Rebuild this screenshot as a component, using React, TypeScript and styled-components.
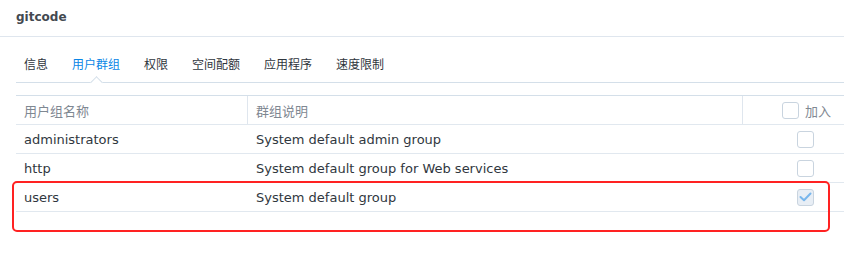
import React from "react";
import styled, { createGlobalStyle } from "styled-components";

const Global = createGlobalStyle`
  html, body { margin: 0; padding: 0; background: #ffffff; }
  body { font-family: "DejaVu Sans", "Noto Sans CJK SC", sans-serif; overflow: hidden; }
  * { box-sizing: border-box; }
`;

const Page = styled.div`
  position: relative;
  width: 844px;
  height: 259px;
  overflow: hidden;
  background: #fff;
`;

const Header = styled.div`
  height: 37px;
  border-bottom: 1px solid #dfe6ee;
  display: flex;
  align-items: center;
  padding: 0 16px 2px;
`;

const Title = styled.div`
  font-family: "DejaVu Sans", sans-serif;
  font-weight: bold;
  font-size: 12px;
  color: #434950;
`;

const Body = styled.div`
  padding: 0 0 0 16px;
`;

const TabBar = styled.div`
  display: flex;
  gap: 24px;
  padding: 9px 8px 0;
  height: 46px;
  align-items: center;
  border-bottom: 1px solid #d4dfe9;
  width: 900px;
`;

const Tab = styled.div<{ $active?: boolean }>`
  position: relative;
  font-family: "Noto Sans CJK SC", sans-serif;
  font-size: 12px;
  line-height: 16px;
  color: ${(p) => (p.$active ? "#0a86e6" : "#2f363d")};
`;

const Notch = styled.div`
  position: absolute;
  left: 50%;
  bottom: -15px;
  width: 9px;
  height: 9px;
  margin-left: -4.5px;
  background: #fff;
  border-left: 1px solid #d4dfe9;
  border-top: 1px solid #d4dfe9;
  transform: rotate(45deg);
`;

const Table = styled.div`
  margin-top: 12px;
  width: 900px;
`;

const Row = styled.div<{ $head?: boolean }>`
  display: grid;
  grid-template-columns: 232px 495px 173px;
  height: ${(p) => (p.$head ? "30px" : "29px")};
  border-top: ${(p) => (p.$head ? "1px solid #d4dfe9" : "none")};
  border-bottom: 1px solid #e1e8ef;
  align-items: stretch;
`;

const Cell = styled.div<{ $head?: boolean; $sep?: boolean }>`
  display: flex;
  align-items: center;
  padding-left: 8px;
  padding-top: 1px;
  font-family: ${(p) =>
    p.$head ? `"Noto Sans CJK SC", sans-serif` : `"DejaVu Sans", "Noto Sans CJK SC", sans-serif`};
  font-size: 13px;
  color: ${(p) => (p.$head ? "#7f8892" : "#30373e")};
  border-right: ${(p) => (p.$sep ? "1px solid #dfe6ee" : "none")};
  white-space: nowrap;
`;

const CheckCell = styled.div<{ $head?: boolean }>`
  display: flex;
  align-items: center;
  gap: 6px;
  padding-left: ${(p) => (p.$head ? "39px" : "54px")};
  font-family: "Noto Sans CJK SC", sans-serif;
  font-size: 13px;
  color: #7f8892;
`;

const Box = styled.div<{ $checked?: boolean }>`
  width: 17px;
  height: 17px;
  border: 1px solid #c9d4df;
  border-radius: 3px;
  background: ${(p) => (p.$checked ? "#e8eef5" : "#fff")};
  display: flex;
  align-items: center;
  justify-content: center;
`;

const Highlight = styled.div`
  position: absolute;
  left: 12px;
  top: 181px;
  width: 818px;
  height: 51px;
  border: 2px solid #ff2222;
  border-radius: 5px;
  pointer-events: none;
`;

const Check = () => (
  <svg width="13" height="10" viewBox="0 0 13 10">
    <path d="M1.5 5 L5 8.2 L11.5 1.5" fill="none" stroke="#78b6ec" strokeWidth="2" strokeLinecap="round" strokeLinejoin="round" />
  </svg>
);

const tabs = ["信息", "用户群组", "权限", "空间配额", "应用程序", "速度限制"];
const rows = [
  { name: "administrators", desc: "System default admin group", checked: false },
  { name: "http", desc: "System default group for Web services", checked: false },
  { name: "users", desc: "System default group", checked: true },
];

export default function App() {
  return (
    <Page>
      <Global />
      <Header>
        <Title>gitcode</Title>
      </Header>
      <Body>
        <TabBar>
          {tabs.map((t, i) => (
            <Tab key={t} $active={i === 1}>
              {t}
              {i === 1 && <Notch />}
            </Tab>
          ))}
        </TabBar>
        <Table>
          <Row $head>
            <Cell $head $sep>用户组名称</Cell>
            <Cell $head $sep>群组说明</Cell>
            <CheckCell $head>
              <Box />
              加入
            </CheckCell>
          </Row>
          {rows.map((r) => (
            <Row key={r.name}>
              <Cell>{r.name}</Cell>
              <Cell>{r.desc}</Cell>
              <CheckCell>
                <Box $checked={r.checked}>{r.checked && <Check />}</Box>
              </CheckCell>
            </Row>
          ))}
        </Table>
      </Body>
      <Highlight />
    </Page>
  );
}
